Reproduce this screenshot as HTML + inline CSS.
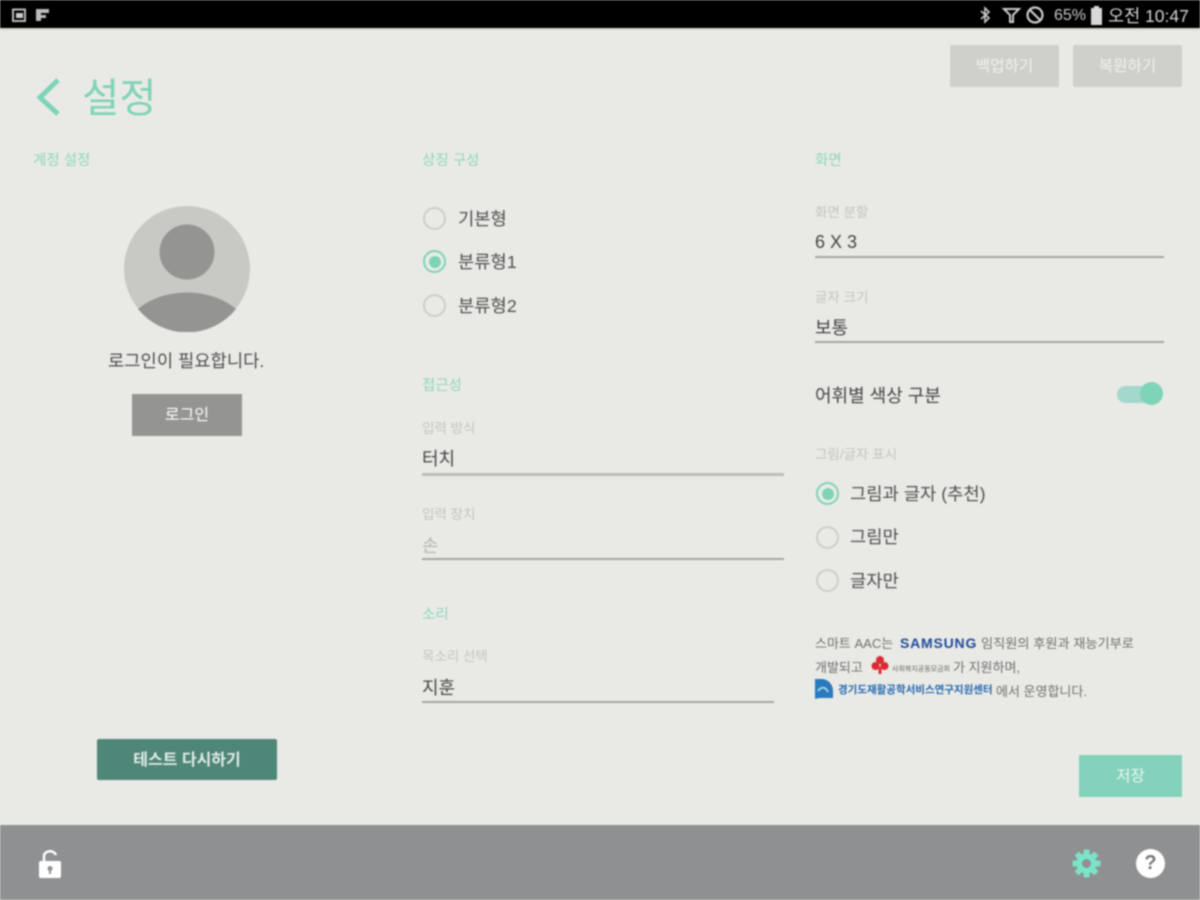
<!DOCTYPE html>
<html lang="ko"><head><meta charset="utf-8"><title>설정</title>
<style>
html,body{margin:0;padding:0;width:1200px;height:900px;overflow:hidden;background:#e9eae6}
#r{position:relative;width:1200px;height:900px;overflow:hidden;background:#e9eae6;font-family:"Liberation Sans","Noto Sans CJK KR",sans-serif;filter:blur(.7px)}
#r div,#r svg{position:absolute}
.t{white-space:nowrap;line-height:1}
.h{color:#8fd6c0;font-size:14.500px}
.l{color:#c3c4c0;font-size:13.500px}
.v{color:#444442;font-size:18px}
.o{color:#4f4f4d;font-size:17.700px}
.u{height:2px;background:#b4b5b0}
.b{text-align:center;color:#fff;font-size:13px}
.rd{width:19px;height:19px;border:2px solid #cdcec9;border-radius:50%;box-sizing:content-box}
.on{border-color:#7fd3b8}
.on::after{content:"";position:absolute;left:3.500px;top:3.500px;width:12px;height:12px;border-radius:50%;background:#7fd3b8}
.n{color:#6f6f6d;font-size:13px}
</style></head><body><div id="r">
<div style="left:0;top:0;width:1200px;height:28px;background:#000"></div>
<div style="left:0;top:28px;width:1200px;height:2px;background:#d6d7d3"></div>
<svg style="left:12px;top:8px" width="40" height="16" viewBox="0 0 40 16"><path fill="none" stroke="#bbb" stroke-width="2" d="M1 1.500H13V13H1Z"/><rect x="4" y="5" width="7" height="5" fill="#ccc"/><path fill="#bbb" d="M24 1H37V5H29V7H34V10H29V13H24Z"/></svg>
<svg style="left:978px;top:5px" width="72" height="20" viewBox="0 0 72 20"><path fill="none" stroke="#ccc" stroke-width="1.600" d="M3 6L11 13L7 17V3L11 7L3 14"/><path fill="none" stroke="#ccc" stroke-width="2" d="M26 4H41L35 10V17H32V10Z"/><circle cx="57" cy="10" r="7.500" fill="none" stroke="#ccc" stroke-width="2.200"/><path stroke="#ccc" stroke-width="2.200" d="M52 5L62 15"/></svg>
<div class="t" style="left:1054px;top:8px;color:#c8c8c8;font-size:16px">65%</div>
<svg style="left:1090px;top:5px" width="14" height="20" viewBox="0 0 14 20"><path fill="#d8d8d8" d="M4 1H9V3H12V20H1V3H4Z"/></svg>
<div class="t" style="left:1108px;top:8px;color:#d4d4d4;font-size:17.500px">오전 10:47</div>

<svg style="left:34px;top:76px" width="30" height="42" viewBox="0 0 30 42"><path fill="none" stroke="#7fd3b8" stroke-width="5" d="M24 4L6 21.500L24 38"/></svg>
<div class="t" style="left:82px;top:78px;color:#7fd3b8;font-size:40.500px">설정</div>
<div class="b" style="left:950px;top:45px;width:109px;height:42px;line-height:44px;background:#cfd0cc;border-radius:2px;font-size:15.600px;color:#f0f0ee">백업하기</div>
<div class="b" style="left:1073px;top:45px;width:109px;height:42px;line-height:44px;background:#cfd0cc;border-radius:2px;font-size:15.600px;color:#f0f0ee">복원하기</div>

<div class="t h" style="left:33px;top:154px">계정 설정</div>
<svg style="left:124px;top:206px" width="126" height="126" viewBox="0 0 126 126"><circle cx="63" cy="63" r="63" fill="#c8c8c4"/><circle cx="63" cy="46" r="27.500" fill="#949592"/><path fill="#949592" d="M14 103C40 81 86 81 112 103A63 63 0 0 1 14 103Z"/></svg>
<div class="t o" style="left:108px;top:353px">로그인이 필요합니다.</div>
<div class="b" style="left:132px;top:394px;width:110px;height:42px;line-height:44px;background:#949592;font-size:16px">로그인</div>
<div class="b" style="left:97px;top:739px;width:180px;height:41px;line-height:43px;background:#4e8677;border-radius:2px;font-size:16px;font-weight:700;color:#e3ece8">테스트 다시하기</div>

<div class="t h" style="left:422px;top:154px">상징 구성</div>
<div class="rd" style="left:423px;top:207px"></div><div class="t o" style="left:458px;top:211px">기본형</div>
<div class="rd on" style="left:423px;top:250px"></div><div class="t o" style="left:458px;top:254px">분류형1</div>
<div class="rd" style="left:423px;top:294px"></div><div class="t o" style="left:458px;top:298px">분류형2</div>
<div class="t h" style="left:422px;top:379px">접근성</div>
<div class="t l" style="left:422px;top:422px">입력 방식</div>
<div class="t v" style="left:422px;top:450px">터치</div>
<div class="u" style="left:422px;top:473px;width:362px;height:3px;background:#bcbdb8"></div>
<div class="t l" style="left:422px;top:508px">입력 장치</div>
<div class="t" style="left:422px;top:537px;color:#b5b6b2;font-size:18px">손</div>
<div class="u" style="left:422px;top:558px;width:362px;background:#a5a6a1"></div>
<div class="t h" style="left:422px;top:608px">소리</div>
<div class="t l" style="left:422px;top:650px">목소리 선택</div>
<div class="t v" style="left:422px;top:679px">지훈</div>
<div class="u" style="left:422px;top:701px;width:352px;background:#a5a6a1"></div>

<div class="t h" style="left:815px;top:154px">화면</div>
<div class="t l" style="left:815px;top:206px">화면 분할</div>
<div class="t v" style="left:815px;top:233px">6 X 3</div>
<div class="u" style="left:815px;top:256px;width:349px;background:#a5a6a1"></div>
<div class="t l" style="left:815px;top:291px">글자 크기</div>
<div class="t v" style="left:815px;top:319px">보통</div>
<div class="u" style="left:815px;top:341px;width:349px;background:#a5a6a1"></div>
<div class="t v" style="left:815px;top:387px">어휘별 색상 구분</div>
<div style="left:1117px;top:386px;width:40px;height:17px;border-radius:9px;background:#a3d8cd"></div>
<div style="left:1140px;top:382px;width:23px;height:23px;border-radius:50%;background:#7fd3b8"></div>
<div class="t l" style="left:815px;top:448px">그림/글자 표시</div>
<div class="rd on" style="left:816px;top:482px"></div><div class="t o" style="left:850px;top:486px">그림과 글자 (추천)</div>
<div class="rd" style="left:816px;top:526px"></div><div class="t o" style="left:850px;top:529px">그림만</div>
<div class="rd" style="left:816px;top:569px"></div><div class="t o" style="left:850px;top:573px">글자만</div>

<div class="t n" style="left:815px;top:637px">스마트 AAC는</div>
<div class="t" style="left:900px;top:636px;color:#1f4a9c;font-size:14px;font-weight:700;letter-spacing:.8px">SAMSUNG</div>
<div class="t n" style="left:981px;top:637px;font-size:13.200px">임직원의 후원과 재능기부로</div>
<div class="t n" style="left:815px;top:661px">개발되고</div>
<svg style="left:870px;top:655px" width="20" height="21" viewBox="0 0 20 21"><g fill="#dc2a32"><circle cx="10" cy="5" r="4"/><circle cx="5.500" cy="11" r="4"/><circle cx="14.500" cy="11" r="4"/><rect x="8.500" y="12" width="3" height="7"/></g></svg>
<div class="t" style="left:892px;top:666px;color:#666;font-size:7px">사회복지공동모금회</div>
<div class="t n" style="left:953px;top:661px">가 지원하며,</div>
<svg style="left:815px;top:679px" width="18" height="20" viewBox="0 0 18 20"><path fill="#2a79bd" d="M0 0H8C14 1 18 6 18 12V19H4L0 20Z"/><path fill="none" stroke="#9fd0ea" stroke-width="2" d="M3 12C6 7 11 8 13 13"/></svg>
<div class="t" style="left:838px;top:685px;color:#2467ad;font-size:10.500px;font-weight:700">경기도재활공학서비스연구지원센터</div>
<div class="t n" style="left:996px;top:685px">에서 운영합니다.</div>

<div class="b" style="left:1079px;top:755px;width:103px;height:42px;line-height:44px;background:#84d2bb;font-size:15.500px;color:#edf7f3">저장</div>

<div style="left:0;top:825px;width:1200px;height:75px;background:#8f9092"></div>
<svg style="left:38px;top:848px" width="24" height="32" viewBox="0 0 24 32"><path fill="none" stroke="#fff" stroke-width="2.500" d="M6 14V8C6 3 15 1 18 7"/><rect x="1" y="13" width="22" height="17" rx="2" fill="#fff"/><circle cx="12" cy="20.500" r="2.500" fill="#8f9092"/><rect x="11" y="21" width="2" height="5" fill="#8f9092"/></svg>
<svg style="left:1072px;top:849px" width="29" height="29" viewBox="0 0 29 29"><g fill="#7be3c7"><circle cx="14.500" cy="14.500" r="10"/><rect x="11.500" y="0.500" width="6" height="28" rx="1.500"/><rect x="11.500" y="0.500" width="6" height="28" rx="1.500" transform="rotate(45 14.500 14.500)"/><rect x="11.500" y="0.500" width="6" height="28" rx="1.500" transform="rotate(90 14.500 14.500)"/><rect x="11.500" y="0.500" width="6" height="28" rx="1.500" transform="rotate(135 14.500 14.500)"/></g><circle cx="14.500" cy="14.500" r="4.500" fill="#8f9092"/></svg>
<div style="left:1136px;top:849px;width:29px;height:29px;border-radius:50%;background:#fff;text-align:center;line-height:29px;color:#77787a;font-size:20px;font-weight:700">?</div>
</div></body></html>
